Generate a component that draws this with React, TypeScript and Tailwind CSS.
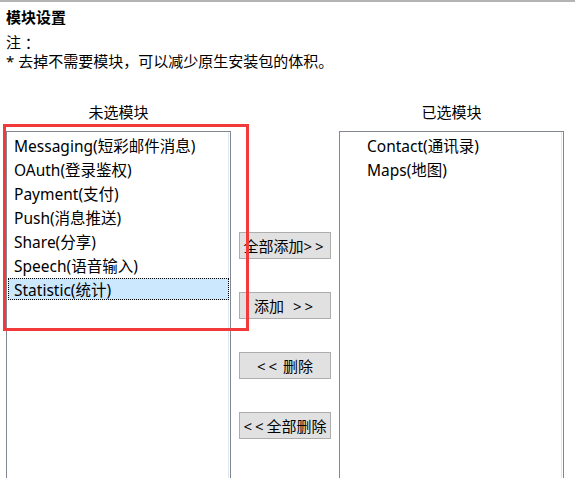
import React from 'react'

const unselected = [
  'Messaging(短彩邮件消息)',
  'OAuth(登录鉴权)',
  'Payment(支付)',
  'Push(消息推送)',
  'Share(分享)',
  'Speech(语音输入)',
  'Statistic(统计)',
]

const selected = ['Contact(通讯录)', 'Maps(地图)']

function Arrows({ text }: { text: string }) {
  return <span className="tracking-[3px]">{text}</span>
}

function Btn({ children }: { children: React.ReactNode }) {
  return (
    <button className="w-[92px] h-[27px] border border-[#adadad] bg-[#e1e1e1] text-[15px] leading-none text-black flex items-center justify-center whitespace-nowrap pt-px">
      {children}
    </button>
  )
}

export default function App() {
  return (
    <div
      className="relative w-[575px] h-[478px] overflow-hidden bg-white text-black"
      style={{ fontFamily: '"Noto Sans", "Noto Sans CJK SC", sans-serif' }}
    >
      <div className="h-[2px] bg-[#b4b4b4]" />

      <div className="pl-[6px] pt-[5px]">
        <div className="text-[15px] leading-[20px] font-bold">模块设置</div>
        <div className="mt-[6px] h-[19px] flex text-[15px] leading-[19px]">
          <span>注</span>
          <span className="font-['Noto_Sans_CJK_JP',sans-serif] h-[19px] leading-[19px]">：</span>
        </div>
        <div className="h-[19px] text-[15px] leading-[19px]">* 去掉不需要模块，可以减少原生安装包的体积。</div>
      </div>

      <div className="flex pl-[6px] mt-[31px] gap-[8px]">
        {/* left column */}
        <div className="w-[225px] flex flex-col">
          <div className="text-[15px] leading-[20px] text-center h-[20px]">未选模块</div>
          <div className="mt-[9px] h-[360px] border border-[#828790] px-[1px] pt-[2px] flex flex-col gap-[2px] shadow-[inset_-1px_0_0_#fff,inset_-2px_0_0_#dfe7f0]">
            {unselected.map((m, i) => (
              <div
                key={m}
                className={
                  'h-[22px] pl-[5px] pt-[3px] flex items-center text-[15.5px] whitespace-nowrap border ' +
                  (i === unselected.length - 1
                    ? 'bg-[#cce8ff] border-dotted border-black'
                    : 'border-transparent')
                }
              >
                {m}
              </div>
            ))}
          </div>
        </div>

        {/* buttons */}
        <div className="w-[92px] flex flex-col gap-[33px] pt-[130px]">
          <Btn>
            全部添加<Arrows text=">>" />
          </Btn>
          <Btn>
            添加<span className="ml-[9px]"><Arrows text=">>" /></span>
          </Btn>
          <Btn>
            <Arrows text="<<" />
            <span className="ml-[3px]">删除</span>
          </Btn>
          <Btn>
            <Arrows text="<<" />全部删除
          </Btn>
        </div>

        {/* right column */}
        <div className="w-[225px] flex flex-col">
          <div className="text-[15px] leading-[20px] text-center h-[20px]">已选模块</div>
          <div className="mt-[9px] h-[360px] border border-[#828790] px-[1px] pt-[2px] flex flex-col gap-[2px] shadow-[inset_-1px_0_0_#fff,inset_-2px_0_0_#dfe7f0]">
            {selected.map((m) => (
              <div
                key={m}
                className="h-[22px] pl-[25px] pt-[3px] flex items-center text-[15.5px] whitespace-nowrap border border-transparent"
              >
                {m}
              </div>
            ))}
          </div>
        </div>
      </div>

      {/* annotation box */}
      <div className="absolute left-[3px] top-[124px] w-[246px] h-[207px] border-[3px] border-[#f23a3a] pointer-events-none" />
    </div>
  )
}
